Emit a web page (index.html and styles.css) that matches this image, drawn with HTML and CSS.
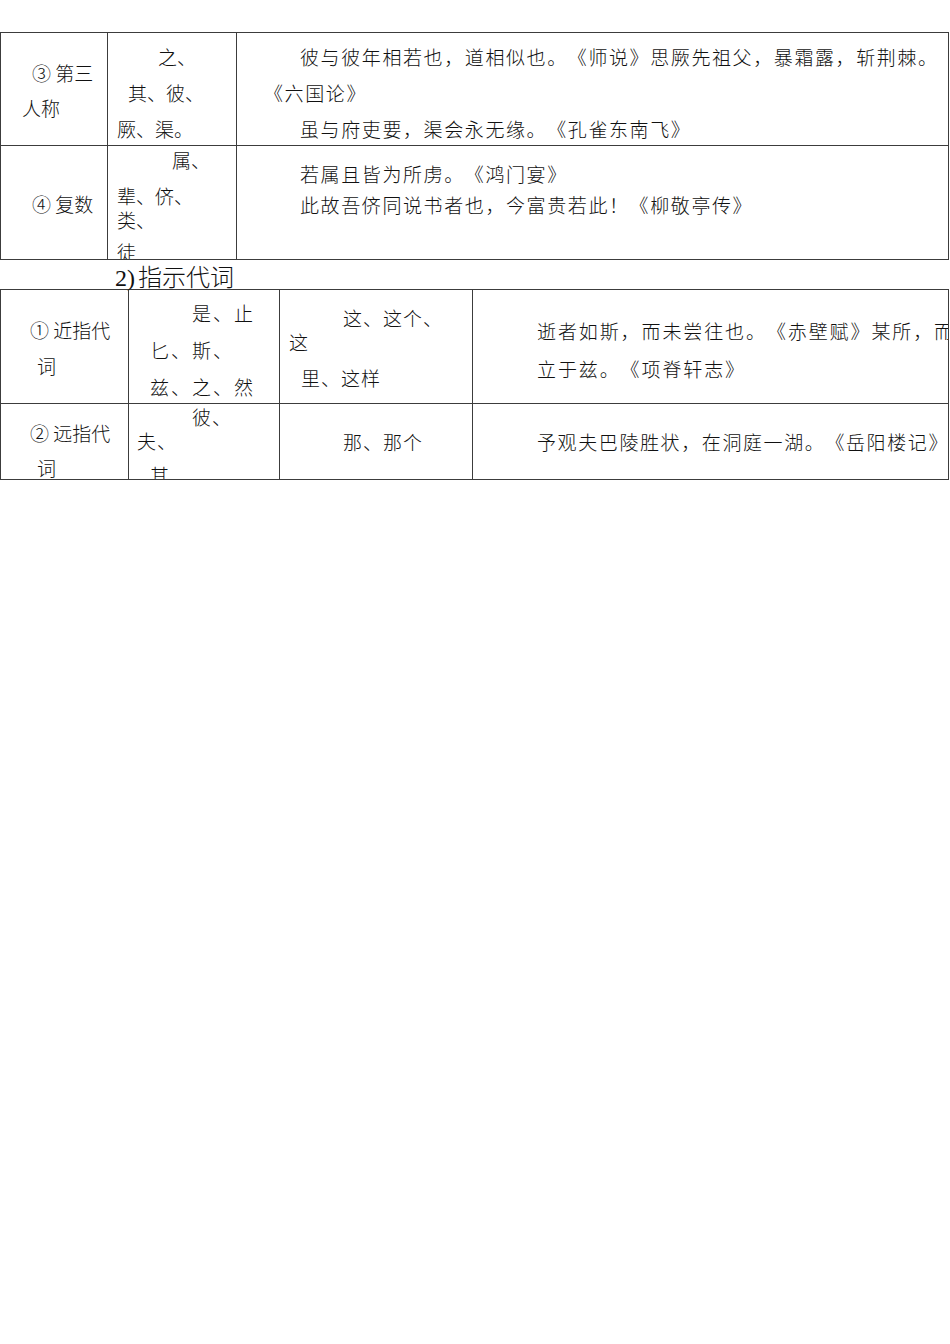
FILE: index.html
```html
<!DOCTYPE html>
<html lang="zh">
<head>
<meta charset="utf-8">
<title>代词</title>
<link rel="stylesheet" href="styles.css">
</head>
<body>
<div class="page">
  <div class="grid t1">
    <div class="cell r1 c-a">
      <div class="ln l35 ind11">③ 第三</div>
      <div class="ln l35 ind21">人称</div>
    </div>
    <div class="cell r1 c-b">
      <div class="ln l36 ind50">之、</div>
      <div class="ln l36 ind20">其、彼、</div>
      <div class="ln l36 ind9">厥、渠。</div>
    </div>
    <div class="cell r1 c-c">
      <div class="ln l36 ind63">彼与彼年相若也，道相似也。《师说》思厥先祖父，暴霜露，斩荆棘。</div>
      <div class="ln l36 ind27">《六国论》</div>
      <div class="ln l36 ind63">虽与府吏要，渠会永无缘。《孔雀东南飞》</div>
    </div>

    <div class="cell r2 c-a2">
      <div class="ln l35 ind31">④ 复数</div>
    </div>
    <div class="cell r2 c-b2">
      <div class="ln l24 ind64">属、</div>
      <div class="ln l24 ind9 gap12">辈、侪、</div>
      <div class="ln l24 ind9">类、</div>
      <div class="ln l24 ind9 gap8">徒</div>
    </div>
    <div class="cell r2 c-c2">
      <div class="ln l31 ind63">若属且皆为所虏。《鸿门宴》</div>
      <div class="ln l31 ind63">此故吾侪同说书者也，今富贵若此！《柳敬亭传》</div>
    </div>
  </div>

  <div class="heading"><span class="num">2)</span>指示代词</div>

  <div class="grid t2">
    <div class="cell s1 d-a">
      <div class="ln l36 ind29">① 近指代</div>
      <div class="ln l36 ind36">词</div>
    </div>
    <div class="cell s1 d-b">
      <div class="ln l37 ind63">是、止</div>
      <div class="ln l37 ind21">匕、斯、</div>
      <div class="ln l37 ind21">兹、之、然</div>
    </div>
    <div class="cell s1 d-c">
      <div class="ln l24 ind63">这、这个、</div>
      <div class="ln l24 ind9">这</div>
      <div class="ln l24 ind21 gap12">里、这样</div>
    </div>
    <div class="cell s1 d-d">
      <div class="ln l38 ind64">逝者如斯，而未尝往也。《赤壁赋》某所，而</div>
      <div class="ln l38 ind64">立于兹。《项脊轩志》</div>
    </div>

    <div class="cell s2 e-a">
      <div class="ln l35 ind29">② 远指代</div>
      <div class="ln l35 ind36">词</div>
    </div>
    <div class="cell s2 e-b">
      <div class="ln l24 ind63">彼、</div>
      <div class="ln l24 ind8">夫、</div>
      <div class="ln l24 ind21 gap10">其</div>
    </div>
    <div class="cell s2 e-c">
      <div class="ln l24 ind63">那、那个</div>
    </div>
    <div class="cell s2 e-d">
      <div class="ln l24 ind64">予观夫巴陵胜状，在洞庭一湖。《岳阳楼记》</div>
    </div>
  </div>
</div>
</body>
</html>
```

FILE: styles.css
```css
html, body {
  margin: 0;
  padding: 0;
  background: #ffffff;
}

body {
  font-family: "Noto Sans CJK SC", "Liberation Serif", serif;
  color: #111111;
  font-size: 19px;
  text-spacing-trim: space-all;
  font-feature-settings: "halt" 0, "chws" 0;
}

.page {
  width: 950px;
  padding-top: 32px;
}

.grid {
  display: grid;
  width: 948px;
  border-top: 1px solid #3c3c3c;
  border-left: 1px solid #3c3c3c;
}

.t1 {
  grid-template-columns: 107px 129px 712px;
  grid-template-rows: 113px 114px;
}

.t2 {
  grid-template-columns: 128px 151px 193px 476px;
  grid-template-rows: 114px 76px;
}

.cell {
  border-right: 1px solid #3c3c3c;
  border-bottom: 1px solid #3c3c3c;
  overflow: hidden;
  white-space: nowrap;
}

.ln {
  font-weight: 300;
}

.l24 { line-height: 24px; }
.l31 { line-height: 31px; }
.l35 { line-height: 35px; }
.l36 { line-height: 36px; }
.l37 { line-height: 37px; }
.l38 { line-height: 38px; }

.ind8 { padding-left: 8px; }
.ind9 { padding-left: 9px; }
.ind11 { padding-left: 31px; }
.ind20 { padding-left: 20px; }
.ind21 { padding-left: 21px; }
.ind27 { padding-left: 27px; }
.ind29 { padding-left: 29px; }
.ind31 { padding-left: 31px; }
.ind36 { padding-left: 36px; }
.ind50 { padding-left: 50px; }
.ind63 { padding-left: 63px; }
.ind64 { padding-left: 64px; }

.gap8 { margin-top: 8px; }
.gap10 { margin-top: 10px; }
.gap12 { margin-top: 12px; }

/* table 1 vertical placement */
.c-a { padding-top: 22px; }
.c-b { padding-top: 6px; }
.c-c { padding-top: 6px; letter-spacing: 1.6px; }
.c-a2 { padding-top: 40px; }
.c-b2 { padding-top: 2px; }
.c-c2 { padding-top: 12px; letter-spacing: 1.6px; }

.heading {
  height: 29px;
  line-height: 31px;
  padding-left: 115px;
  font-size: 24px;
  font-weight: 300;
  color: #111111;
}

.num {
  font-family: "Liberation Serif", serif;
  font-weight: 400;
  margin-right: 3px;
}

/* table 2 vertical placement */
.d-a { padding-top: 22px; }
.d-b { padding-top: 4px; letter-spacing: 2px; }
.d-c { padding-top: 16px; letter-spacing: 1px; }
.d-d { padding-top: 22px; letter-spacing: 1.9px; }
.e-a { padding-top: 11px; }
.e-b { padding-top: 1px; letter-spacing: 1px; }
.e-c { padding-top: 26px; letter-spacing: 1px; }
.e-d { padding-top: 26px; letter-spacing: 1.6px; }
```
